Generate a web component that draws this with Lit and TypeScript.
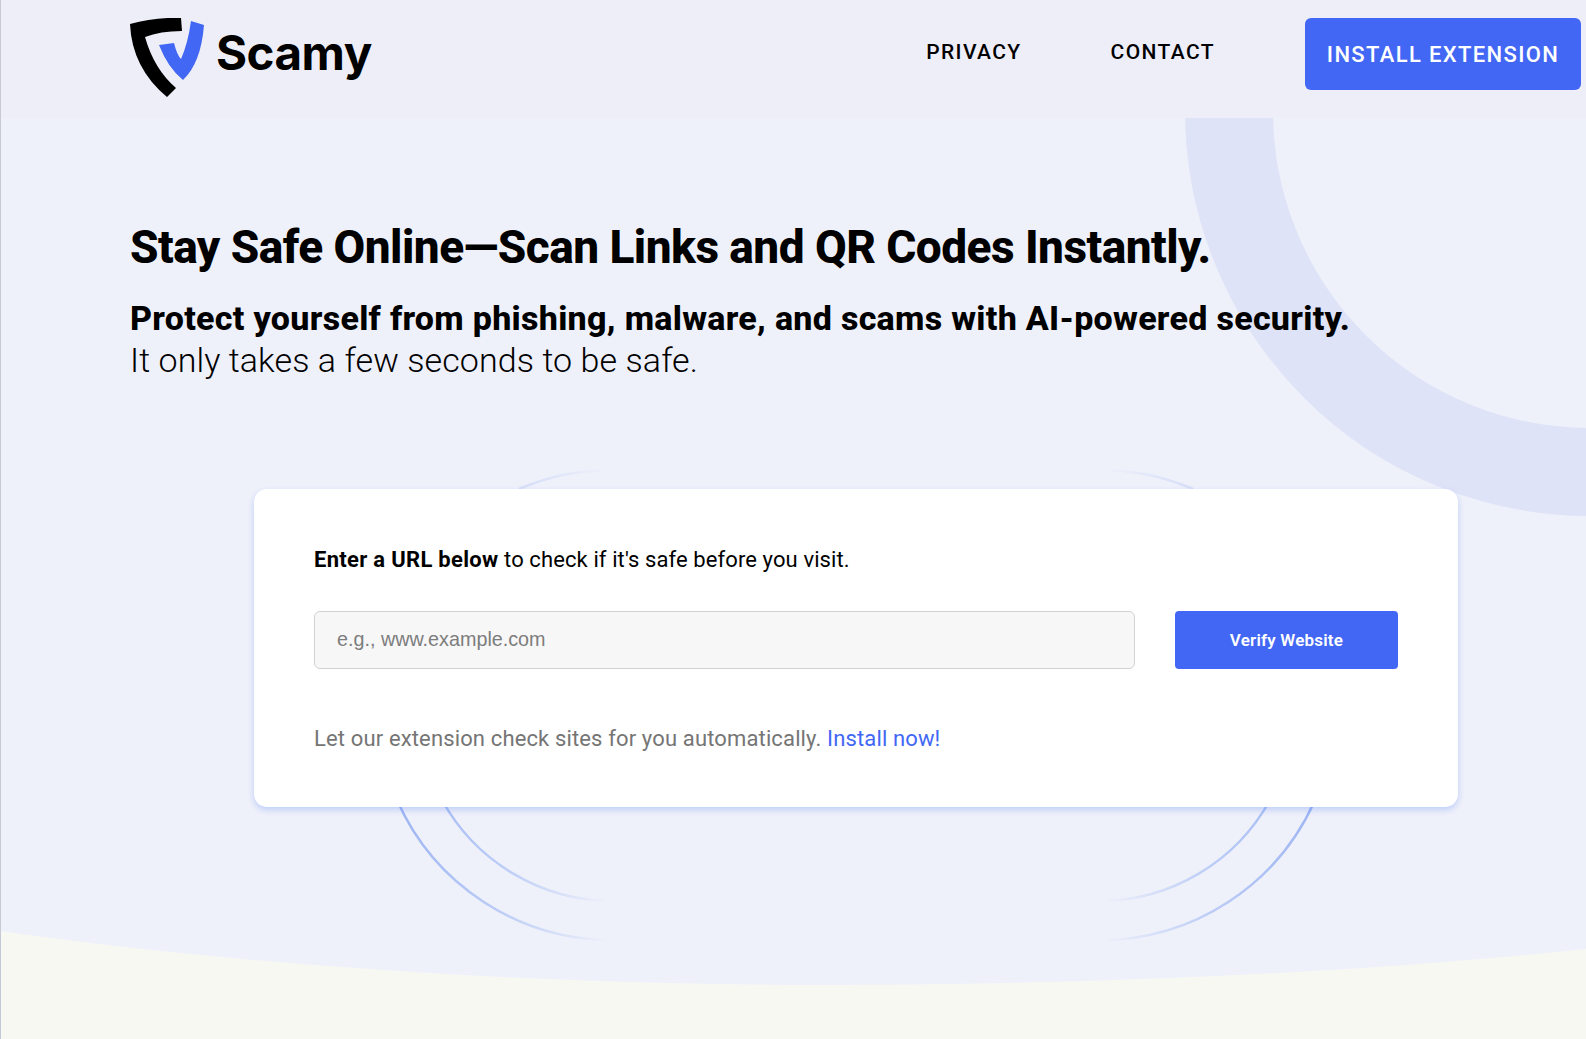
import { LitElement, html, css } from "lit";
import { customElement } from "lit/decorators.js";

@customElement("app-root")
export class AppRoot extends LitElement {
  static styles = css`
    :host {
      display: block;
      font-family: "Roboto", "Liberation Sans", sans-serif;
      color: #000;
    }
    .page {
      position: relative;
      height: 1039px;
      overflow: hidden;
      background: #eff1fa;
      border-left: 1px solid #c6c9d6;
      box-sizing: border-box;
    }
    .decor {
      position: absolute;
      left: -1px;
      top: 0;
      width: 1586px;
      height: 1039px;
    }
    .header {
      position: relative;
      display: flex;
      align-items: flex-start;
      height: 118px;
      padding: 18px 5px 0 129px;
      box-sizing: border-box;
      background: #eeeef9;
    }
    .brand {
      display: flex;
      align-items: flex-start;
      gap: 11px;
      flex: 1;
    }
    .brand svg {
      width: 75px;
      height: 80px;
    }
    .brand span {
      font-family: "Inter", sans-serif;
      font-weight: 700;
      font-size: 47.5px;
      line-height: 70px;
      letter-spacing: -0.5px;
    }
    .nav {
      display: flex;
      gap: 89px;
      margin-right: 90px;
      font-size: 21px;
      font-weight: 500;
      letter-spacing: 1.4px;
      line-height: 68px;
    }
    .install {
      width: 276px;
      height: 72px;
      border-radius: 6px;
      background: #4267f5;
      color: #fff;
      font-size: 22px;
      font-weight: 500;
      letter-spacing: 1.35px;
      display: flex;
      align-items: center;
      justify-content: center;
    }
    .hero {
      position: relative;
      padding: 101px 0 0 129px;
    }
    h1 {
      margin: 0;
      font-size: 46px;
      font-weight: 800;
      line-height: 56px;
      letter-spacing: -0.54px;
    }
    .lead {
      margin: 22px 0 0;
      font-size: 34px;
      line-height: 42px;
      font-weight: 300;
      letter-spacing: 0.08px;
    }
    .lead b {
      font-weight: 800;
      letter-spacing: 0.29px;
    }
    .card {
      position: relative;
      box-sizing: border-box;
      width: 1204px;
      height: 318px;
      margin: 108px 0 0 253px;
      padding: 56px 60px 0;
      background: #fff;
      border-radius: 13px;
      box-shadow: 0 3px 6px rgba(66, 120, 245, 0.28);
    }
    .prompt {
      margin: 0;
      font-size: 22px;
      line-height: 30px;
      letter-spacing: 0.1px;
    }
    .prompt b {
      font-weight: 700;
      letter-spacing: 0.3px;
    }
    .row {
      display: flex;
      gap: 40px;
      margin-top: 36px;
    }
    .field {
      flex: 1;
      height: 58px;
      box-sizing: border-box;
      padding: 0 22px 2px;
      background: #f7f7f8;
      border: 1px solid #d2d2d4;
      border-radius: 6px;
      font-family: "Liberation Sans", sans-serif;
      font-size: 19.75px;
      color: #000;
      outline: none;
    }
    .field::placeholder {
      color: #7d7d7d;
      opacity: 1;
    }
    .verify {
      width: 223px;
      height: 58px;
      border: none;
      border-radius: 4px;
      background: #4267f5;
      color: #fff;
      font-family: inherit;
      font-size: 17px;
      font-weight: 600;
      letter-spacing: 0.2px;
    }
    .note {
      margin: 55px 0 0;
      font-size: 22px;
      line-height: 30px;
      letter-spacing: 0.14px;
      color: #757575;
    }
    .note a {
      color: #4267f5;
      text-decoration: none;
    }
  `;

  render() {
    return html`
      <div class="page">
        <svg class="decor" viewBox="0 0 1586 1039" aria-hidden="true">
          <defs>
            <linearGradient id="fadeL" gradientUnits="userSpaceOnUse" x1="400" y1="0" x2="606" y2="0">
              <stop offset="0" stop-color="#9fb6f3" />
              <stop offset="0.5" stop-color="#bccdf6" />
              <stop offset="1" stop-color="#eef0fa" />
            </linearGradient>
            <linearGradient id="fadeR" gradientUnits="userSpaceOnUse" x1="1312" y1="0" x2="1106" y2="0">
              <stop offset="0" stop-color="#9fb6f3" />
              <stop offset="0.5" stop-color="#bccdf6" />
              <stop offset="1" stop-color="#eef0fa" />
            </linearGradient>
          </defs>
          <circle cx="1590" cy="111" r="361" fill="none" stroke="#dfe3f8" stroke-width="88" />
          <path d="M0 931 C260 968 560 985 820 985 C1060 985 1340 975 1586 949 V1039 H0 Z" fill="#f8f8f3" />
          <path d="M397 800 A235 235 0 0 0 612 940" fill="none" stroke="url(#fadeL)" stroke-width="2.5" />
          <path d="M442 800 A195 195 0 0 0 612 901" fill="none" stroke="url(#fadeL)" stroke-width="2.5" />
          <path d="M1315 800 A235 235 0 0 1 1100 940" fill="none" stroke="url(#fadeR)" stroke-width="2.5" />
          <path d="M1270 800 A195 195 0 0 1 1100 901" fill="none" stroke="url(#fadeR)" stroke-width="2.5" />
          <path d="M612 470 A235 235 0 0 0 519 489" fill="none" stroke="url(#fadeL)" stroke-width="2.5" opacity="0.6" />
          <path d="M1100 470 A235 235 0 0 1 1193 489" fill="none" stroke="url(#fadeR)" stroke-width="2.5" opacity="0.6" />
        </svg>
        <header class="header">
          <div class="brand">
            <svg viewBox="0 0 75 80">
              <path d="M0 6 Q24 -1 51 0 L52 13 Q30 13 15 19 Q24 51 46 70 L37 79 Q2 50 0 6 Z" fill="#000" />
              <path d="M61 3 L74 7 Q71 45 53 62 Q38 50 29 27 L44 25 Q47 37 51 41 Q58 25 61 3 Z" fill="#4267f5" />
            </svg>
            <span>Scamy</span>
          </div>
          <nav class="nav">
            <span>PRIVACY</span>
            <span>CONTACT</span>
          </nav>
          <div class="install">INSTALL EXTENSION</div>
        </header>
        <section class="hero">
          <h1>Stay Safe Online—Scan Links and QR Codes Instantly.</h1>
          <p class="lead">
            <b>Protect yourself from phishing, malware, and scams with AI-powered security.</b><br />
            It only takes a few seconds to be safe.
          </p>
        </section>
        <section class="card">
          <p class="prompt"><b>Enter a URL below</b> to check if it's safe before you visit.</p>
          <div class="row">
            <input class="field" placeholder="e.g., www.example.com" />
            <button class="verify">Verify Website</button>
          </div>
          <p class="note">Let our extension check sites for you automatically. <a href="#">Install now!</a></p>
        </section>
      </div>
    `;
  }
}
